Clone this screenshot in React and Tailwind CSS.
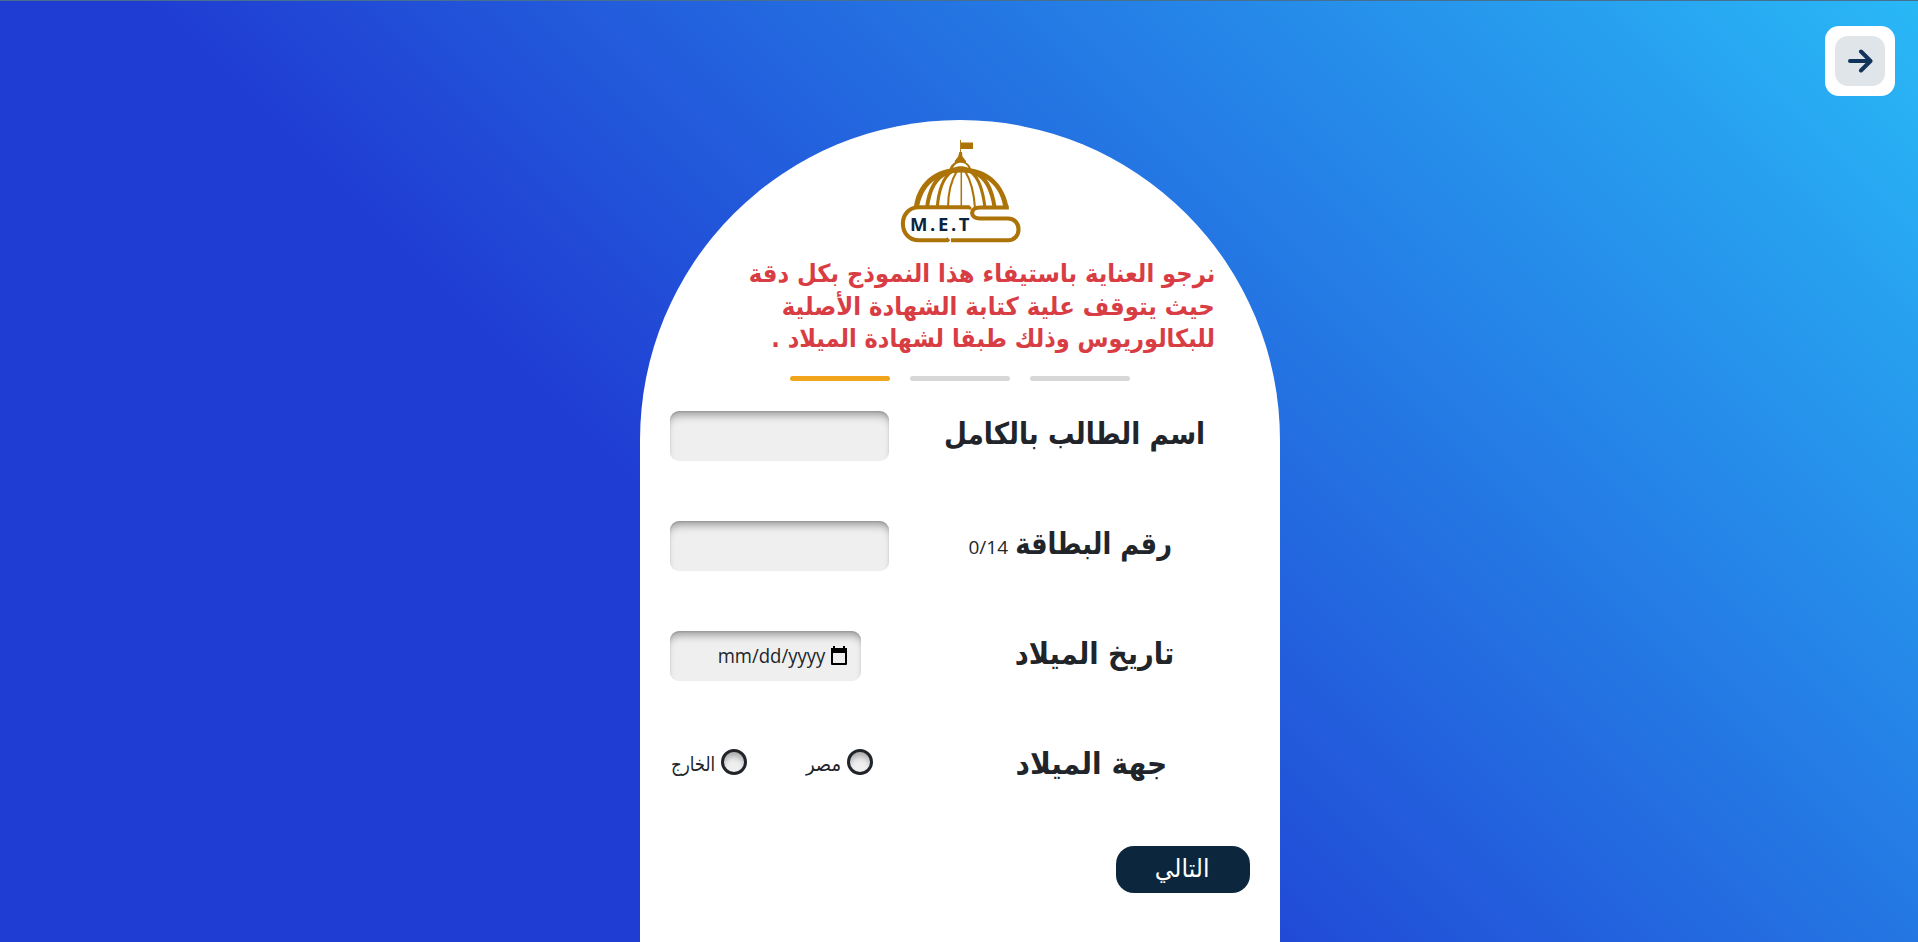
import React from 'react';

const fieldClass = 'h-[50px] rounded-[9px] bg-[#efefef] shadow-[inset_0_8px_9px_-4px_rgba(0,0,0,0.36),inset_0_1px_2px_rgba(0,0,0,0.12)]';

function Logo() {
  return (
    <svg direction="ltr" className="block h-[110px] w-[130px]" viewBox="0 0 130 110" fill="none" stroke="#ac7408">
      <path d="M65.500 2v14" strokeWidth="0.900" />
      <path d="M66 4.500h12V11H66z" fill="#ac7408" stroke="none" />
      <path fillRule="evenodd" d="M64.300 14h2.600l.6 4.500 3.500 4.500v1.500c2 1 4.500 3.500 5 6.500H54.700c.5-3 3-5.500 5-6.500V23l3.500-4.500zM58 30c5-2.500 10.500-2.500 15.500 0-2.500-7-13-7-15.500 0z" fill="#ac7408" stroke="none" />
      <path d="M18.800 71C21 46 39 29.600 66 29.600S110 46 113.900 71h-5.300C106 49 91 34.500 66 34.500S27 49 23.800 71z" fill="#ac7408" stroke="none" />
      <path d="M32 70c2-18 9-31 20-35M99.700 70C97 52 91 39 80 35" strokeWidth="4" />
      <path d="M42.300 70c1-17 6-31 14-36M90 70c-2-17-7-31-14-36" strokeWidth="3.100" />
      <path d="M53 70c0-15 4-29 9-37M80 70c-1-15-5-29-10-37" strokeWidth="2.100" />
      <path d="M66.300 33v37" strokeWidth="1.500" />
      <path d="M74.500 69.300H24C2.500 69.300 2.500 102.300 24 102.300h28.300l1.500-1.500M113.700 69.500H85C74.500 69.500 74.500 80.500 85 80.500h28c14 0 14 21.800 0 21.800H56M73.500 70.500l2-2" strokeWidth="4.100" />
      <text x="15" y="93" fill="#0c2340" stroke="none" className="font-['Open_Sans',sans-serif] text-[18.500px] font-bold" textLength="59.500" lengthAdjust="spacing">M.E.T</text>
    </svg>
  );
}

function Row({ label, width, scale, offset, field, extra }) {
  return (
    <div className="flex h-[50px] items-center justify-between">
      <div className={`flex items-center ${offset}`}>
        <span className={`${width} flex justify-start whitespace-nowrap pb-[5px] text-[30px] font-bold leading-[45px]`}>
          <span className={`shrink-0 origin-right ${scale}`}>{label}</span>
        </span>
        {extra}
      </div>
      {field}
    </div>
  );
}

function Radio({ children, width, scale }) {
  return (
    <label className="flex items-center gap-[6px] pb-[4px]">
      <span className="mb-[4px] size-[26px] rounded-full border-[3px] border-[#212529] bg-[#efefef] shadow-[inset_0_6px_6px_-2px_rgba(0,0,0,0.3)]" />
      <span className={`${width} flex whitespace-nowrap text-[20px]`}><span className={`shrink-0 origin-right ${scale}`}>{children}</span></span>
    </label>
  );
}

export default function App() {
  return (
    <main dir="rtl" className="relative flex h-[942px] w-full justify-center overflow-hidden border-t border-[#47708f] bg-[linear-gradient(45deg,#203dd3_38%,#29b8f6_100%)] font-['DejaVu_Sans',sans-serif] text-[#212529]">
      <button className="absolute left-[1825px] top-[25px] flex size-[70px] items-center justify-center rounded-[14px] bg-white">
        <span className="flex size-[50px] items-center justify-center rounded-[13px] bg-[#e0e5e9]">
          <svg width="26" height="24" viewBox="0 0 26 24" fill="none" stroke="#12335a" strokeWidth="4" strokeLinecap="round" strokeLinejoin="round"><path d="M3 12h20M14 2.500l9.500 9.500-9.500 9.500" /></svg>
        </span>
      </button>
      <section className="ml-[-1px] mr-[-3px] mt-[119px] flex h-[823px] w-[640px] flex-col rounded-t-[320px] bg-white px-[30px]">
        <div className="mt-[18px] flex justify-center"><Logo /></div>
        <div className="mr-[35px] mt-[10px] flex flex-col items-start text-[25px] font-bold leading-[32.500px] text-[#d93d44]">
          <p className="origin-right scale-x-[0.909] whitespace-nowrap">نرجو العناية باستيفاء هذا النموذج بكل دقة</p>
          <p className="origin-right scale-x-[0.912] whitespace-nowrap">حيث يتوقف علية كتابة الشهادة الأصلية</p>
          <p className="origin-right scale-x-[0.9] whitespace-nowrap">للبكالوريوس وذلك طبقا لشهادة الميلاد .</p>
        </div>
        <div dir="ltr" className="mt-[20px] flex justify-center gap-5">
          <i className="h-[5px] w-[100px] rounded-full bg-[#f0a51d]" />
          <i className="h-[5px] w-[100px] rounded-full bg-[#d7d7d7]" />
          <i className="h-[5px] w-[100px] rounded-full bg-[#d7d7d7]" />
        </div>
        <div className="mt-[30px] flex flex-col gap-[60px]">
          <Row label="اسم الطالب بالكامل" width="w-[261px]" scale="scale-x-[0.879]" offset="mr-[45px]" field={<input className={`w-[219px] ${fieldClass}`} />} />
          <Row label="رقم البطاقة" width="w-[156px]" scale="scale-x-[0.857]" offset="mr-[78px]" extra={<span className="mr-[8px] mt-[3px] font-['Open_Sans',sans-serif] text-[19px]">0/14</span>} field={<input className={`w-[219px] ${fieldClass}`} />} />
          <Row label="تاريخ الميلاد" width="w-[160px]" scale="scale-x-[0.91]" offset="mr-[76px]" field={
            <div className={`flex w-[191px] items-center gap-[5px] pr-[13px] ${fieldClass}`}>
              <svg width="18" height="20" viewBox="0 0 18 20" fill="none" stroke="#000"><path d="M2 3h14v15H2z" strokeWidth="2" strokeLinejoin="round" /><path d="M1 2h16v5H1zM3 0h2v3H3zM13 0h2v3h-2z" fill="#000" stroke="none" /></svg>
              <span dir="ltr" className="origin-right scale-x-[0.95] font-['Open_Sans',sans-serif] text-[19.500px]">mm/dd/yyyy</span>
            </div>
          } />
          <Row label="جهة الميلاد" width="w-[152px]" scale="scale-x-[0.935]" offset="mr-[83px]" field={<div className="flex gap-[59px]"><Radio width="w-[35px]" scale="scale-x-90">مصر</Radio><Radio width="w-[45px]" scale="scale-x-[0.83]">الخارج</Radio></div>} />
        </div>
        <button className="mt-[55px] flex h-[47px] w-[134px] items-center justify-center rounded-[18px] bg-[#0b263d] text-[25px] text-white"><span className="mr-px scale-x-[0.94]">التالي</span></button>
      </section>
    </main>
  );
}
